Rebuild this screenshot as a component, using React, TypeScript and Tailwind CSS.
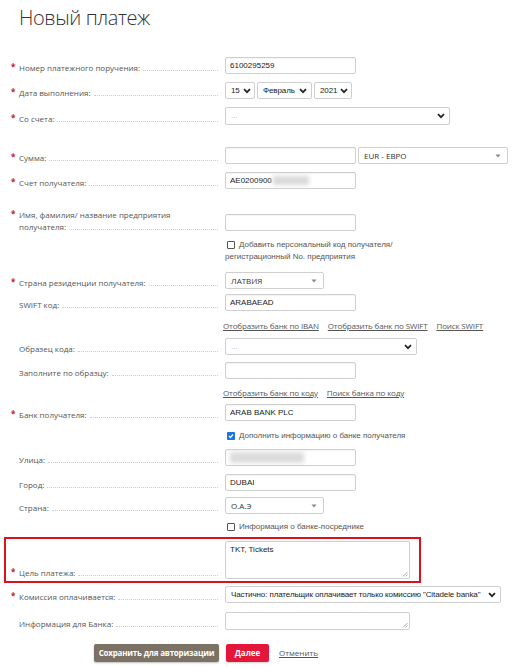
import React from "react";

const LABEL_FONT = "font-['Open_Sans',sans-serif]";
const FIELD_FONT = "font-['Liberation_Sans',Arial,sans-serif]";

const Chevron = () => (
  <svg width="8" height="6" viewBox="0 0 8 6" className="shrink-0">
    <path d="M1 1.2 L4 4.2 L7 1.2" fill="none" stroke="#222" strokeWidth="1.7" />
  </svg>
);

const Triangle = () => (
  <svg width="6" height="4" viewBox="0 0 6 4" className="shrink-0">
    <path d="M0.5 0.5 L5.5 0.5 L3 3.5 Z" fill="#888" />
  </svg>
);

const Star = ({ on }: { on?: boolean }) => (
  <span className="w-[8px] shrink-0 self-start pt-[1px] text-[8px] leading-[8px] font-bold text-[#d0112b]">{on ? "*" : ""}</span>
);

const Label = ({ text, required }: { text: React.ReactNode; required?: boolean }) => (
  <div className={`flex items-end w-[218px] h-[12px] pl-[11px] text-[8px] leading-[12px] text-[#555] ${LABEL_FONT}`}>
    <Star on={required} />
    <span className="whitespace-nowrap">{text}</span>
    <span className="flex-1 ml-[3px] mb-[3px] border-b border-dotted border-[#cccccc]" />
  </div>
);

const Row = ({
  label,
  required,
  children,
  className = "",
}: {
  label: React.ReactNode;
  required?: boolean;
  children: React.ReactNode;
  className?: string;
}) => (
  <div className={`flex items-end ${className}`}>
    <Label text={label} required={required} />
    <div className="ml-[7px] flex gap-[2px]">{children}</div>
  </div>
);

const Input = ({ value, width = "w-[131px]", children }: { value?: string; width?: string; children?: React.ReactNode }) => (
  <div
    className={`${width} h-[17px] flex items-center px-[4px] rounded-[2px] border border-[#cfcfcf] bg-white shadow-[inset_0_1px_1px_rgba(0,0,0,0.05)] text-[8px] text-[#1a1a1a] ${FIELD_FONT}`}
  >
    {value}
    {children}
  </div>
);

const NativeSelect = ({ value, width, muted }: { value: string; width: string; muted?: boolean }) => (
  <div
    className={`${width} h-[17px] flex items-center justify-between gap-[3px] pl-[5px] pr-[4px] rounded-[2px] border border-[#cfcfcf] bg-white text-[8px] ${
      muted ? "text-[#aaa]" : "text-[#1a1a1a]"
    } ${FIELD_FONT}`}
  >
    <span className="whitespace-nowrap tracking-[-0.1px]">{value}</span>
    <Chevron />
  </div>
);

const ComboSelect = ({ value, width }: { value: string; width: string }) => (
  <div
    className={`${width} h-[17px] flex items-center justify-between pl-[5px] pr-[6px] rounded-[2px] border border-[#cfcfcf] bg-white text-[8px] text-[#333] ${LABEL_FONT}`}
  >
    <span>{value}</span>
    <Triangle />
  </div>
);

const Box = ({ checked }: { checked?: boolean }) =>
  checked ? (
    <span className="flex w-[8px] h-[8px] mr-[4px] ml-[2px] rounded-[1px] bg-[#1a73e8] items-center justify-center shrink-0">
      <svg width="6" height="6" viewBox="0 0 6 6">
        <path d="M1 3 L2.5 4.5 L5 1.5" fill="none" stroke="#fff" strokeWidth="1.2" />
      </svg>
    </span>
  ) : (
    <span className="block w-[8px] h-[8px] mr-[4px] ml-[2px] rounded-[1px] border border-[#555] bg-white shrink-0" />
  );

const Check = ({ checked, children }: { checked?: boolean; children: React.ReactNode }) => (
  <div className={`ml-[225px] h-[12px] flex items-center text-[8px] leading-[12px] text-[#555] whitespace-nowrap ${FIELD_FONT}`}>
    <Box checked={checked} />
    {children}
  </div>
);

const Links = ({ items }: { items: string[] }) => (
  <div className={`ml-[223px] h-[12px] flex gap-[9px] text-[8px] leading-[12px] text-[#555] tracking-[-0.15px] ${LABEL_FONT}`}>
    {items.map((t) => (
      <span key={t} className="underline underline-offset-1">
        {t}
      </span>
    ))}
  </div>
);

const Area = ({ value, height }: { value?: string; height: string }) => (
  <div
    className={`relative w-[185px] ${height} px-[4px] pt-[2px] rounded-[2px] border border-[#cfcfcf] bg-white text-[8px] text-[#1a1a1a] ${FIELD_FONT}`}
  >
    {value}
    <svg width="6" height="6" viewBox="0 0 6 6" className="absolute right-[1px] bottom-[1px]">
      <path d="M5.5 1 L1 5.5 M5.5 3.5 L3.5 5.5" stroke="#999" strokeWidth="0.8" />
    </svg>
  </div>
);

export default function App() {
  return (
    <div className="w-[530px] h-[668px] bg-white overflow-hidden">
      <h1 className={`pl-[19px] pt-[3px] text-[20px] leading-[30px] font-light tracking-[-0.4px] text-[#333] ${LABEL_FONT}`}>
        Новый платеж
      </h1>

      <Row label="Номер платежного поручения:" required className="mt-[24px]">
        <Input value="6100295259" />
      </Row>
      <Row label="Дата выполнения:" required className="mt-[8px]">
        <NativeSelect value="15" width="w-[30px]" />
        <NativeSelect value="Февраль" width="w-[55px]" />
        <NativeSelect value="2021" width="w-[38px]" />
      </Row>
      <Row label="Со счета:" required className="mt-[8px]">
        <div className="h-[18px]">
          <NativeSelect value="..." width="w-[225px] h-[18px]" muted />
        </div>
      </Row>

      <Row label="Сумма:" required className="mt-[22px]">
        <Input />
        <ComboSelect value="EUR - ЕВРО" width="w-[150px]" />
      </Row>
      <Row label="Счет получателя:" required className="mt-[8px]">
        <Input value="AE0200900">
          <span className="ml-[1px] w-[36px] h-[9px] bg-[#d9d9d9] blur-[2px]" />
        </Input>
      </Row>

      <div className="flex items-end mt-[20px]">
        <div className={`w-[218px] pl-[11px] text-[8px] leading-[12px] text-[#555] ${LABEL_FONT}`}>
          <div className="flex h-[12px]">
            <Star on />
            <span>Имя, фамилия/ название предприятия</span>
          </div>
          <div className="flex items-end h-[12px] pl-[8px]">
            <span>получателя:</span>
            <span className="flex-1 ml-[3px] mb-[3px] border-b border-dotted border-[#cccccc]" />
          </div>
        </div>
        <div className="ml-[7px] mb-[2px]">
          <Input />
        </div>
      </div>

      <div className="mt-[6px]">
        <Check>Добавить персональный код получателя/</Check>
        <div className={`ml-[225px] h-[12px] text-[8px] leading-[12px] text-[#555] ${FIELD_FONT}`}>
          регистрационный No. предприятия
        </div>
      </div>

      <Row label="Страна резиденции получателя:" required className="mt-[9px]">
        <ComboSelect value="ЛАТВИЯ" width="w-[99px]" />
      </Row>
      <Row label="SWIFT код:" className="mt-[5px]">
        <Input value="ARABAEAD" />
      </Row>
      <div className="mt-[9px]">
        <Links items={["Отобразить банк по IBAN", "Отобразить банк по SWIFT", "Поиск SWIFT"]} />
      </div>
      <Row label="Образец кода:" className="mt-[6px]">
        <NativeSelect value="..." width="w-[192px]" muted />
      </Row>
      <Row label="Заполните по образцу:" className="mt-[7px]">
        <Input />
      </Row>
      <div className="mt-[8px]">
        <Links items={["Отобразить банк по коду", "Поиск банка по коду"]} />
      </div>
      <Row label="Банк получателя:" required className="mt-[5px]">
        <Input value="ARAB BANK PLC" />
      </Row>
      <div className="mt-[9px]">
        <Check checked>Дополнить информацию о банке получателя</Check>
      </div>
      <Row label="Улица:" className="mt-[7px]">
        <Input>
          <span className="w-[74px] h-[11px] bg-[#dcdcdc] blur-[2px]" />
        </Input>
      </Row>
      <Row label="Город:" className="mt-[8px]">
        <Input value="DUBAI" />
      </Row>
      <Row label="Страна:" className="mt-[6px]">
        <ComboSelect value="О.А.Э" width="w-[99px]" />
      </Row>
      <div className="mt-[7px]">
        <Check>Информация о банке-посреднике</Check>
      </div>

      <div className="mt-[4px] ml-[4px] w-[417px] border-2 border-[#d8121f] py-[2px]">
        <Row label="Цель платежа:" required className="-ml-[6px]">
          <Area value="TKT, Tickets" height="h-[38px]" />
        </Row>
      </div>

      <Row label="Комиссия оплачивается:" required className="mt-[3px]">
        <NativeSelect value={'Частично: плательщик оплачивает только комиссию "Citadele banka"'} width="w-[276px]" />
      </Row>
      <Row label="Информация для Банка:" className="mt-[9px]">
        <Area height="h-[18px]" />
      </Row>

      <div className={`mt-[14px] pl-[94px] flex items-center gap-[7px] text-[8px] ${LABEL_FONT}`}>
        <button className="w-[125px] h-[18px] rounded-[2px] bg-[#7b7164] text-white font-bold whitespace-nowrap tracking-[-0.2px] shadow-[0_1px_2px_rgba(0,0,0,0.25)]">
          Сохранить для авторизации
        </button>
        <button className="w-[43px] h-[18px] rounded-[2px] bg-[#e3173a] text-white font-bold shadow-[0_1px_2px_rgba(0,0,0,0.2)]">
          Далее
        </button>
        <span className="ml-[3px] text-[#555] underline underline-offset-1">Отменить</span>
      </div>
    </div>
  );
}
